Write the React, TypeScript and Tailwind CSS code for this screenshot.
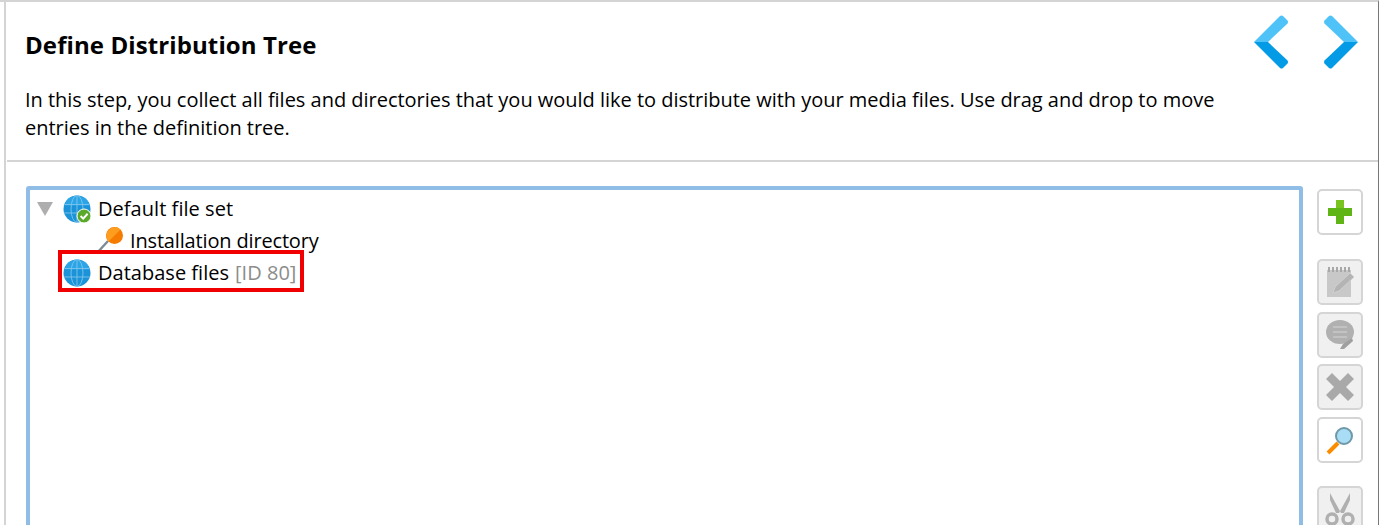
const FONT = "font-['Open_Sans','Noto_Sans',sans-serif]";

function Globe({ check }: { check?: boolean }) {
  return (
    <svg width="28" height="28" viewBox="0 0 28 28" className="shrink-0">
      <circle cx="14" cy="14" r="13.500" fill="#1b93d8" />
      <path d="M14 .5a13.500 13.500 0 0 1 13 10H1A13.500 13.500 0 0 1 14 .5z" fill="#2ba5e6" />
      <g fill="none" stroke="#7fc4ec" strokeWidth="0.9">
        <ellipse cx="14" cy="14" rx="6" ry="13.500" />
        <path d="M14 .5v27M1.500 9.500h25M1 18h26" />
      </g>
      {check && (
        <g>
          <circle cx="21" cy="21" r="7" fill="#5aa92a" stroke="#fff" strokeWidth="1" />
          <path d="M17.600 21l2.600 2.600 4.400-4.800" fill="none" stroke="#fff" strokeWidth="2" />
        </g>
      )}
    </svg>
  );
}

function Pin() {
  return (
    <svg width="28" height="28" viewBox="0 0 28 28" className="shrink-0">
      <path d="M0 26l11-12" stroke="#7d8a94" strokeWidth="2.400" />
      <circle cx="17.500" cy="8.500" r="8.500" fill="#f57c00" />
      <path d="M11.500 14.500A8.500 8.500 0 0 1 23.500 2.500z" fill="#ff9d1e" />
    </svg>
  );
}

function ToolButton({ disabled, children }: { disabled?: boolean; children: React.ReactNode }) {
  return (
    <div
      className={
        "w-[46px] h-[46px] shrink-0 rounded-[5px] border-2 border-[#d5d5d5] flex items-center justify-center " +
        (disabled ? "bg-[#f0f0f0]" : "bg-white")
      }
    >
      {children}
    </div>
  );
}

function Arrow({ dir }: { dir: "l" | "r" }) {
  return (
    <svg width="36" height="54" viewBox="0 0 36 54" className={dir === "r" ? "-scale-x-100" : ""}>
      <path d="M0 27 L26 1 Q27.500 0 29 1 L33.500 5.500 Q34.500 7 33.500 8.500 L14 27 Z" fill="#4fc3f7" />
      <path d="M0 27 L26 53 Q27.500 54 29 53 L33.500 48.500 Q34.500 47 33.500 45.500 L14 27 Z" fill="#039be5" />
    </svg>
  );
}

export default function App() {
  return (
    <div className={"w-[1379px] h-[525px] overflow-hidden bg-white text-black " + FONT}>
      <div className="h-full flex border-t-2 border-[#d4d4d4] border-r border-r-[#777]">
        <div className="w-[4px] shrink-0" />
        <div className="flex-1 min-w-0 border-l-2 border-[#d4d4d4] flex flex-col">
          <div className="relative h-[158px] shrink-0 pl-[19px]">
            <h1 className="pt-[27px] text-[24px] leading-[32px] font-bold tracking-[0.1px]">Define Distribution Tree</h1>
            <p className="mt-[25px] w-[1215px] text-[20px] leading-[28px] tracking-[-0.02px]">
              In this step, you collect all files and directories that you would like to distribute with your media files. Use drag and drop to move entries in the definition tree.
            </p>
            <div className="absolute left-[1248px] top-[13px] flex gap-[32px]">
              <Arrow dir="l" />
              <Arrow dir="r" />
            </div>
          </div>
          <div className="h-[2px] shrink-0 ml-px bg-[#d4d4d4]" />
          <div className="flex-1 min-h-0 flex items-start pt-[24px] pl-[20px]">
            <div className="w-[1277px] h-[400px] shrink-0 rounded-t-[3px] border-[4px] border-[#90bde6] pt-[3px] text-[20px] tracking-[0.02px]">
              <div className="flex items-center h-[32px] pl-[7px]">
                <svg width="16" height="14" viewBox="0 0 16 14" className="shrink-0 mr-[10px]">
                  <path d="M0 0h16L8 14z" fill="#aeaeae" />
                </svg>
                <Globe check />
                <span className="ml-[7px] tracking-[0.05px]">Default file set</span>
              </div>
              <div className="flex items-center h-[32px] pl-[67px]">
                <Pin />
                <span className="ml-[5px] tracking-[-0.16px]">Installation directory</span>
              </div>
              <div className="relative flex items-center h-[32px] pl-[33px]">
                <Globe />
                <span className="ml-[7px]">Database files</span>
                <span className="ml-[6px] text-[#8c8c8c]">[ID 80]</span>
                <div className="absolute left-[28px] top-[-7px] w-[246px] h-[42px] border-[4px] border-[#f00000]" />
              </div>
            </div>
            <div className="ml-[14px] mt-[3px] flex flex-col">
              <ToolButton>
                <svg width="26" height="26" viewBox="0 0 26 26">
                  <path d="M9 1h8v8h8v8h-8v8H9v-8H1V9h8z" fill="#5fb515" />
                  <path d="M1 9h8V1h8v8H9z" fill="#7ac41f" />
                </svg>
              </ToolButton>
              <div className="h-[24px]" />
              <ToolButton disabled>
                <svg width="30" height="32" viewBox="0 0 30 32">
                  <rect x="2" y="4" width="24" height="27" fill="#c8c8c8" />
                  <path d="M4 1v5M8 1v5M12 1v5M16 1v5M20 1v5M24 1v5" stroke="#a8a8a8" strokeWidth="2" />
                  <path d="M8 27l2-6L25 7l4 4-15 14z" fill="#b4b4b4" stroke="#d0d0d0" />
                </svg>
              </ToolButton>
              <div className="h-[7px]" />
              <ToolButton disabled>
                <svg width="30" height="32" viewBox="0 0 30 32">
                  <ellipse cx="15" cy="13" rx="14" ry="12" fill="#b0b0b0" />
                  <path d="M8 8h14M8 13h14M8 18h14" stroke="#c8c8c8" strokeWidth="1.500" />
                  <path d="M15 30l3-5 9-6 1 3-9 8z" fill="#a0a0a0" />
                </svg>
              </ToolButton>
              <div className="h-[6px]" />
              <ToolButton disabled>
                <svg width="30" height="30" viewBox="0 0 30 30">
                  <path d="M1 7l6-6 8 8 8-8 6 6-8 8 8 8-6 6-8-8-8 8-6-6 8-8z" fill="#a9a9a9" />
                </svg>
              </ToolButton>
              <div className="h-[7px]" />
              <ToolButton>
                <svg width="28" height="30" viewBox="0 0 28 30">
                  <path d="M2 28l10-10" stroke="#fb8c00" strokeWidth="4" />
                  <circle cx="18" cy="11" r="8" fill="#a8ddf5" stroke="#6f98a8" strokeWidth="2" />
                </svg>
              </ToolButton>
              <div className="h-[23px]" />
              <ToolButton disabled>
                <svg width="30" height="34" viewBox="0 0 30 34">
                  <path d="M5 1l11 20h-5L5 8zM25 1L14 21h5l6-13z" fill="#b0b0b0" />
                  <circle cx="7" cy="27" r="5" fill="none" stroke="#b0b0b0" strokeWidth="3.500" />
                  <circle cx="23" cy="27" r="5" fill="none" stroke="#b0b0b0" strokeWidth="3.500" />
                </svg>
              </ToolButton>
            </div>
          </div>
        </div>
      </div>
    </div>
  );
}
